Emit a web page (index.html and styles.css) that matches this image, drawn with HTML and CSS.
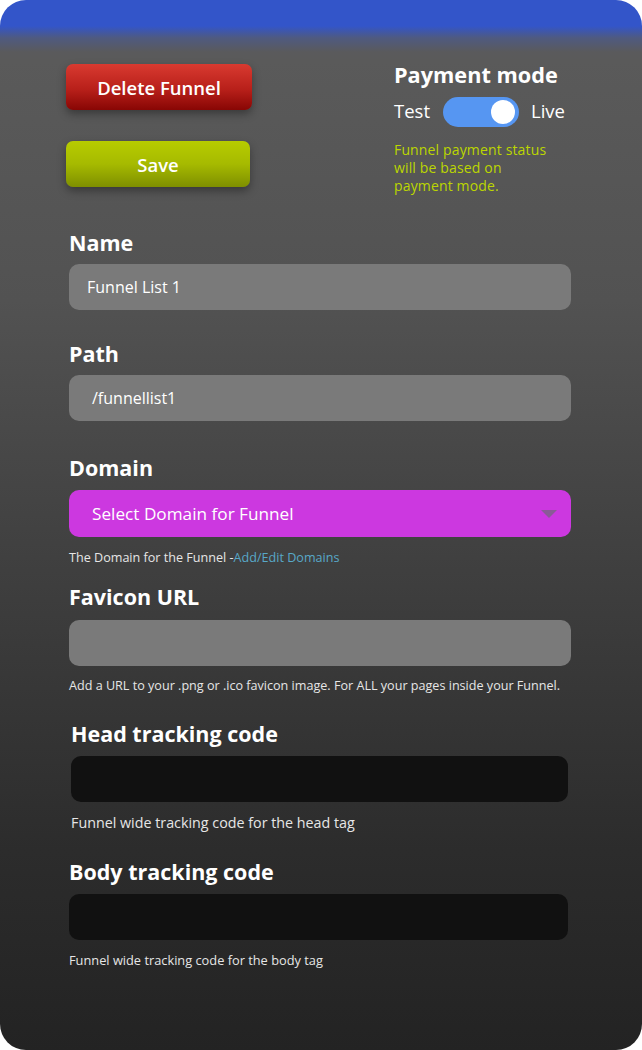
FILE: index.html
```html
<!DOCTYPE html>
<html>
<head>
<meta charset="utf-8">
<link rel="stylesheet" href="styles.css">
</head>
<body>
<div class="panel">
  <div class="top">
    <div class="actions">
      <button class="btn btn-delete">Delete Funnel</button>
      <button class="btn btn-save">Save</button>
    </div>
    <div class="payment">
      <div class="pay-title">Payment mode</div>
      <div class="toggle-row">
        <span class="mode">Test</span>
        <span class="toggle"><span class="knob"></span></span>
        <span class="mode">Live</span>
      </div>
      <div class="pay-note">Funnel payment status<br>will be based on<br>payment mode.</div>
    </div>
  </div>

  <div class="field f-name">
    <div class="label">Name</div>
    <div class="input gray">Funnel List 1</div>
  </div>

  <div class="field f-path">
    <div class="label">Path</div>
    <div class="input gray path">/funnellist1</div>
  </div>

  <div class="field f-domain">
    <div class="label">Domain</div>
    <div class="input select"><span>Select Domain for Funnel</span><span class="caret"></span></div>
    <div class="help help-domain">The Domain for the Funnel -<span class="link">Add/Edit Domains</span></div>
  </div>

  <div class="field f-fav">
    <div class="label">Favicon URL</div>
    <div class="input gray input-fav"></div>
    <div class="help">Add a URL to your .png or .ico favicon image. For ALL your pages inside your Funnel.</div>
  </div>

  <div class="field f-head">
    <div class="label">Head tracking code</div>
    <div class="input dark input-code"></div>
    <div class="help help-lg">Funnel wide tracking code for the head tag</div>
  </div>

  <div class="field f-body">
    <div class="label">Body tracking code</div>
    <div class="input dark input-code"></div>
    <div class="help help-md">Funnel wide tracking code for the body tag</div>
  </div>
</div>
</body>
</html>
```

FILE: styles.css
```css
* { box-sizing: border-box; }
html, body { margin: 0; padding: 0; background: #ffffff; }
body { font-family: "Open Sans", "Liberation Sans", sans-serif; color: #ffffff; }

.panel {
  width: 642px;
  height: 1050px;
  border-radius: 26px;
  overflow: hidden;
  background: linear-gradient(180deg, #3355c9 0px, #3355c9 26px, #4f5a80 38px, #5a5a5c 52px, #5a5a5a 60px, #525252 300px, #3d3d3d 600px, #2c2c2c 850px, #232323 1050px);
  padding: 64px 71px 0 69px;
}

.top { display: flex; justify-content: space-between; }
.actions { display: flex; flex-direction: column; gap: 31px; margin-left: -3px; }
.btn {
  border: none;
  border-radius: 7px;
  font-family: inherit;
  font-weight: 600;
  font-size: 18.5px;
  color: #fff;
  height: 46px;
  padding: 0;
  box-shadow: 0 4px 8px rgba(0,0,0,0.35);
}
.btn-delete { width: 186px; background: linear-gradient(180deg, #d93a30 0%, #b8201a 55%, #880604 100%); }
.btn-save { width: 184px; background: linear-gradient(180deg, #b7cc00 0%, #a6ba00 50%, #7e8f00 100%); }

.payment { width: 177px; margin-top: -1px; }
.pay-title { font-weight: 700; font-size: 21.7px; line-height: 24px; }
.toggle-row { display: flex; align-items: center; margin-top: 10px; height: 30px; }
.mode { font-size: 18.5px; line-height: 24px; margin-top: -3px; }
.toggle {
  width: 76px; height: 30px; border-radius: 15px; background: #5696f2;
  margin: 0 12px 0 13px; position: relative;
}
.knob {
  position: absolute; right: 4px; top: 3px; width: 24px; height: 24px; border-radius: 50%; background: #fff;
}
.pay-note { color: #bcd600; font-size: 14px; letter-spacing: 0.15px; line-height: 18px; margin-top: 14px; white-space: nowrap; }

.field { display: flex; flex-direction: column; }
.label { font-weight: 700; font-size: 21.5px; line-height: 24px; }
.input {
  height: 46px; border-radius: 10px; margin-top: 9px;
  display: flex; align-items: center; font-size: 16px;
}
.gray { background: #7a7a7a; padding-left: 18px; }
.path { padding-left: 23px; }
.select { background: #cc38e0; padding: 0 14px 0 23px; justify-content: space-between; height: 47px; margin-top: 10px; font-size: 17.2px; }
.caret { width: 0; height: 0; border-left: 8px solid transparent; border-right: 8px solid transparent; border-top: 8px solid #8a5a96; }
.dark { background: #111111; }
.input-fav { margin-top: 11px; }
.input-code { margin-top: 10px; }
.help { font-size: 12.6px; line-height: 16px; margin-top: 12px; color: #e6e6e6; white-space: nowrap; }
.help-domain { margin-top: 13px; }
.help-lg { font-size: 14.3px; margin-top: 13px; }
.help-md { font-size: 12.8px; }
.link { color: #58a8c8; }

.f-name { margin-top: 36px; }
.f-path { margin-top: 32px; }
.f-domain { margin-top: 35px; }
.f-fav { margin-top: 19px; }
.f-head { margin-top: 28px; margin-left: 2px; margin-right: 3px; }
.f-body { margin-top: 29px; margin-right: 3px; }
```
